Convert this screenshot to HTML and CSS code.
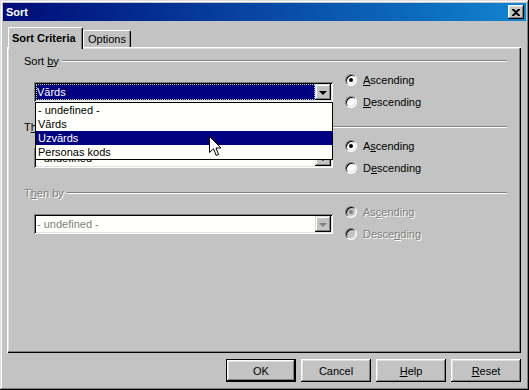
FILE: index.html
```html
<!DOCTYPE html>
<html>
<head>
    <link rel="stylesheet" href="styles.css">
</head>
<body>
    <!-- Dialog window -->
    <div class="window">
        <div class="titlebar">
            <span class="title">Sort</span>
            <span class="close">
                <svg width="8" height="7" viewBox="0 0 8 7"><path d="M0 0h2l2 2 2-2h2v1L5 3.5 8 6v1H6L4 5 2 7H0V6l3-2.5L0 1z" fill="#000"/></svg>
            </span>
        </div>

        <!-- Tabs -->
        <div class="tabs">
            <div class="tab active">Sort Criteria</div>
            <div class="tab">Options</div>
        </div>

        <!-- Tab page -->
        <div class="panel">
            <div class="section">
                <div class="sec-head"><span>Sort <u>b</u>y</span></div>
                <div class="sec-body">
                    <div class="combo">
                        <div class="combo-text focus">Vārds</div>
                        <div class="combo-btn"><span class="arrow"></span></div>
                        <ul class="list">
                            <li>- undefined -</li>
                            <li>Vārds</li>
                            <li class="hl">Uzvārds</li>
                            <li>Personas kods</li>
                        </ul>
                    </div>
                    <div class="radios">
                        <label class="radio"><span class="dot on"></span><span><u>A</u>scending</span></label>
                        <label class="radio"><span class="dot"></span><span><u>D</u>escending</span></label>
                    </div>
                </div>
            </div>

            <div class="section">
                <div class="sec-head"><span>T<u>h</u>en by</span></div>
                <div class="sec-body">
                    <div class="combo">
                        <div class="combo-text">- undefined -</div>
                        <div class="combo-btn"><span class="arrow"></span></div>
                    </div>
                    <div class="radios">
                        <label class="radio"><span class="dot on"></span><span>A<u>s</u>cending</span></label>
                        <label class="radio"><span class="dot"></span><span>D<u>e</u>scending</span></label>
                    </div>
                </div>
            </div>

            <div class="section disabled">
                <div class="sec-head"><span>T<u>h</u>en by</span></div>
                <div class="sec-body">
                    <div class="combo">
                        <div class="combo-text">- undefined -</div>
                        <div class="combo-btn"><span class="arrow"></span></div>
                    </div>
                    <div class="radios">
                        <label class="radio"><span class="dot on"></span><span>As<u>c</u>ending</span></label>
                        <label class="radio"><span class="dot"></span><span>Desce<u>n</u>ding</span></label>
                    </div>
                </div>
            </div>
        </div>

        <!-- Buttons -->
        <div class="buttons">
            <button class="btn default">OK</button>
            <button class="btn">Cancel</button>
            <button class="btn"><u>H</u>elp</button>
            <button class="btn"><u>R</u>eset</button>
        </div>

        <!-- Mouse pointer -->
        <svg class="cursor" width="13" height="21" viewBox="0 0 13 21">
            <path d="M0.5 0.5V16.5L4.5 12.8L7.2 19.5L9.6 18.5L7 12H12Z" fill="#fff" stroke="#000" stroke-width="1"/>
        </svg>
    </div>
</body>
</html>
```

FILE: styles.css
```css
/* Page */
body {
    margin: 0;
    font-family: "Liberation Sans", Arial, sans-serif;
    font-size: 11px;
    color: #000;
}

/* Window frame */
.window {
    position: relative;
    width: 529px;
    height: 390px;
    box-sizing: border-box;
    padding: 3px;
    background: #c3c3c3;
    box-shadow: inset -1px -1px #000, inset 1px 1px #dfdfdf, inset -2px -2px #808080, inset 2px 2px #fff;
}

/* Title bar */
.titlebar {
    height: 18px;
    display: flex;
    align-items: center;
    justify-content: space-between;
    padding: 0 2px 0 3px;
    background: linear-gradient(to right, #000c78, #1084d0);
}

.title {
    color: #fff;
    font-weight: bold;
}

.close {
    width: 16px;
    height: 14px;
    display: flex;
    align-items: center;
    justify-content: center;
    background: #c3c3c3;
    box-shadow: inset -1px -1px #000, inset 1px 1px #fff, inset -2px -2px #808080, inset 2px 2px #dfdfdf;
}

/* Tabs */
.tabs {
    height: 26px;
    display: flex;
    align-items: flex-end;
    padding-left: 5px;
}

.tab {
    height: 17px;
    box-sizing: border-box;
    padding: 0 4px;
    display: flex;
    align-items: center;
    border-top: 1px solid #fff;
    border-left: 1px solid #fff;
    border-right: 1px solid #000;
    box-shadow: inset -1px 0 #808080;
    border-radius: 2px 2px 0 0;
    background: #c3c3c3;
}

.tab.active {
    position: relative;
    z-index: 1;
    height: 22px;
    margin-bottom: -2px;
    padding: 0 3px 2px 3px;
    font-weight: bold;
    width: 75px;
}

/* Tab page */
.panel {
    width: 514px;
    height: 306px;
    box-sizing: border-box;
    margin-left: 4px;
    padding-top: 7px;
    box-shadow: inset 1px 1px #fff, inset -1px -1px #000, inset -2px -2px #808080, inset 2px 2px #dfdfdf;
}

/* Group of controls */
.section {
    height: 66px;
    padding-left: 17px;
}

.sec-head {
    height: 14px;
    display: flex;
    align-items: center;
    gap: 3px;
}

.sec-head::after {
    content: "";
    flex: 1;
    height: 0;
    margin-right: 14px;
    border-top: 1px solid #808080;
    border-bottom: 1px solid #fff;
}

.sec-body {
    display: flex;
    align-items: flex-start;
    padding-left: 10px;
}

/* Combo box */
.combo {
    position: relative;
    width: 299px;
    height: 20px;
    margin-top: 14px;
    box-sizing: border-box;
    padding: 2px;
    display: flex;
    background: #fffffb;
    box-shadow: inset 1px 1px #808080, inset -1px -1px #fff, inset 2px 2px #000, inset -2px -2px #dfdfdf;
}

.combo-text {
    flex: 1;
    display: flex;
    align-items: center;
    padding-left: 1px;
}

.combo-text.focus {
    background: #000080;
    color: #fff;
    outline: 1px dotted #c8c890;
    outline-offset: -1px;
}

.combo-btn {
    width: 16px;
    height: 16px;
    display: flex;
    align-items: center;
    justify-content: center;
    background: #c3c3c3;
    box-shadow: inset -1px -1px #000, inset 1px 1px #dfdfdf, inset -2px -2px #808080, inset 2px 2px #fff;
}

.arrow {
    width: 0;
    height: 0;
    border-left: 4px solid transparent;
    border-right: 4px solid transparent;
    border-top: 4px solid #000;
    margin-top: 1px;
}

/* Open drop-down list */
.list {
    position: absolute;
    top: 20px;
    left: 1px;
    z-index: 2;
    width: 298px;
    box-sizing: border-box;
    margin: 0;
    padding: 0;
    list-style: none;
    background: #fffffb;
    border: 1px solid #000;
}

.list li {
    height: 14px;
    line-height: 14px;
    padding-left: 2px;
}

.list li.hl {
    background: #000080;
    color: #fff;
}

/* Radio buttons */
.radios {
    margin-left: 12px;
    margin-top: 4px;
    display: flex;
    flex-direction: column;
    gap: 6px;
}

.radio {
    height: 16px;
    display: flex;
    align-items: center;
    gap: 6px;
}

.dot {
    position: relative;
    width: 12px;
    height: 12px;
    box-sizing: border-box;
    border-radius: 50%;
    background: #fff;
    border: 1px solid;
    border-color: #808080 #fff #fff #808080;
    box-shadow: inset 1px 1px #000, inset -1px -1px #dfdfdf;
}

.dot.on::after {
    content: "";
    position: absolute;
    left: 3px;
    top: 3px;
    width: 4px;
    height: 4px;
    border-radius: 50%;
    background: #000;
}

/* Disabled group */
.disabled {
    color: #808080;
    text-shadow: 1px 1px #fff;
}

.disabled .combo-text {
    text-shadow: none;
}

.disabled .dot {
    background: #c3c3c3;
}

.disabled .dot.on::after {
    background: #808080;
}

.disabled .arrow {
    border-top-color: #808080;
}

/* Dialog buttons */
.buttons {
    display: flex;
    justify-content: flex-end;
    gap: 5px;
    margin-top: 6px;
    padding-right: 5px;
}

.btn {
    width: 70px;
    height: 23px;
    padding: 0;
    border: none;
    font-family: "Liberation Sans", Arial, sans-serif;
    font-size: 11px;
    color: #000;
    background: #c3c3c3;
    box-shadow: inset -1px -1px #000, inset 1px 1px #fff, inset -2px -2px #808080, inset 2px 2px #dfdfdf;
}

.btn.default {
    box-shadow: inset 0 0 0 1px #000, inset -2px -2px #000, inset 2px 2px #fff, inset -3px -3px #808080, inset 3px 3px #dfdfdf;
}

/* Pointer over the list */
.cursor {
    position: absolute;
    left: 209px;
    top: 136px;
    z-index: 3;
}
```
